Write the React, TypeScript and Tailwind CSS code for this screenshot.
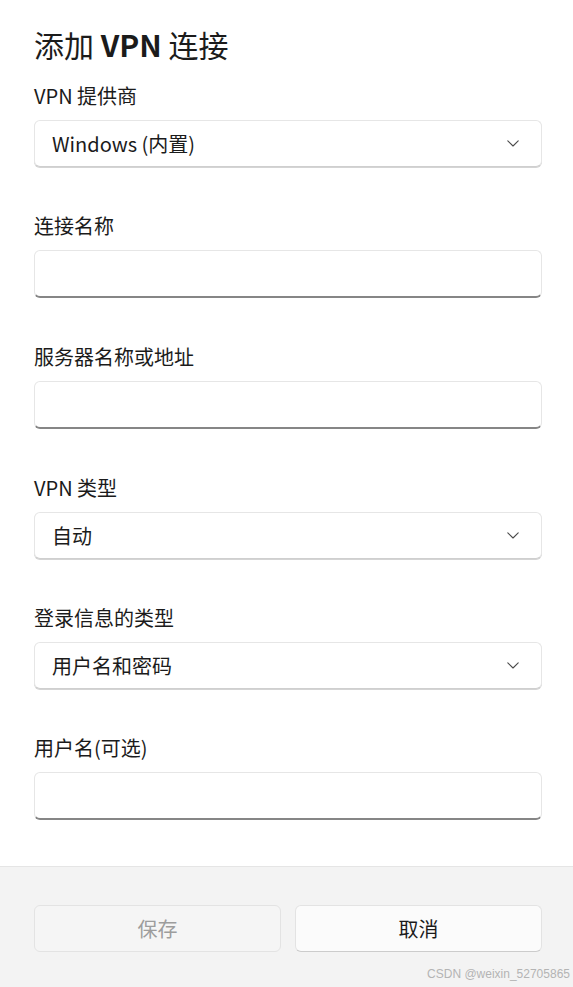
import { ReactNode } from 'react';

const font = { fontFamily: '"Noto Sans CJK SC", "Noto Sans", sans-serif' };

function Chevron() {
  return (
    <svg width="12" height="7" viewBox="0 0 12 7" fill="none">
      <path d="M0.8 0.8 L6 6 L11.2 0.8" stroke="#4a4a4a" strokeWidth="1.1" strokeLinecap="round" strokeLinejoin="round" />
    </svg>
  );
}

function Field({ label, children }: { label: string; children: ReactNode }) {
  return (
    <div className="flex flex-col gap-[10px]">
      <div className="text-[20px] leading-[28px] text-[#1b1b1b]">{label}</div>
      {children}
    </div>
  );
}

function Select({ value }: { value: string }) {
  return (
    <div className="flex h-[47px] items-center justify-between rounded-[6px] border border-[#e6e6e6] border-b-[#cfcfcf] bg-white pl-[17px] pr-[22px] shadow-[0_1px_0_#d4d4d4]">
      <span className="text-[20px] text-[#1b1b1b]">{value}</span>
      <Chevron />
    </div>
  );
}

function TextBox() {
  return (
    <div className="h-[48px] rounded-[6px] border border-[#e6e6e6] border-b-2 border-b-[#868686] bg-white" />
  );
}

export default function App() {
  return (
    <div className="flex h-[987px] w-[573px] flex-col bg-white" style={font}>
      <div className="flex flex-1 flex-col pl-[34px] pr-[31px] pt-[24px]">
        <h1 className="text-[30px] leading-[40px] text-[#1b1b1b]">
          添加 <span className="font-semibold">VPN</span> 连接
        </h1>
        <div className="mt-[18px] flex flex-col gap-[45px]">
          <Field label="VPN 提供商">
            <Select value="Windows (内置)" />
          </Field>
          <Field label="连接名称">
            <TextBox />
          </Field>
          <Field label="服务器名称或地址">
            <TextBox />
          </Field>
          <Field label="VPN 类型">
            <Select value="自动" />
          </Field>
          <Field label="登录信息的类型">
            <Select value="用户名和密码" />
          </Field>
          <Field label="用户名(可选)">
            <TextBox />
          </Field>
        </div>
      </div>
      <div className="relative flex h-[121px] gap-[14px] border-t border-[#e5e5e5] bg-[#f3f3f3] pl-[34px] pr-[31px] pt-[38px]">
        <button className="h-[47px] flex-1 rounded-[6px] border border-[#e3e3e3] bg-[#f5f5f5] text-[20px] text-[#9d9d9d]">
          保存
        </button>
        <button className="h-[47px] flex-1 rounded-[6px] border border-[#e3e3e3] border-b-[#cccccc] bg-[#fbfbfb] text-[20px] text-[#1b1b1b]">
          取消
        </button>
        <span className="absolute bottom-[4px] right-[3px] text-[12px] text-[#b4b4b4]" style={{ fontFamily: '"Liberation Sans", sans-serif' }}>
          CSDN @weixin_52705865
        </span>
      </div>
    </div>
  );
}
